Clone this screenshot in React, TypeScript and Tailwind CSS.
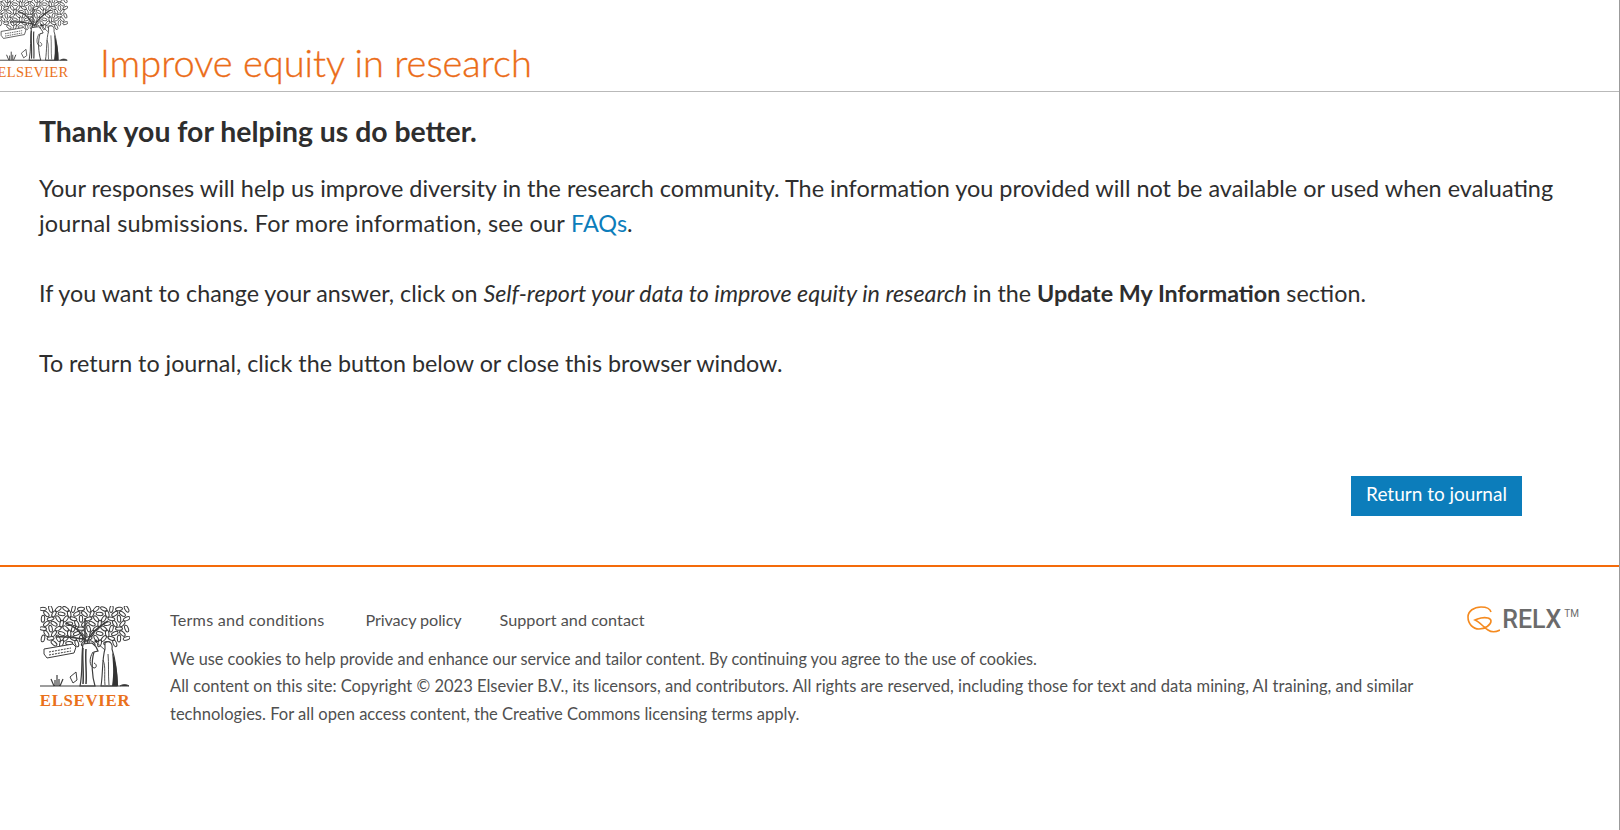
// Elsevier "thank you" confirmation page
const leaves: [number, number, number][] = [];
for (let row = 0; row < 8; row++) {
  for (let col = 0; col < 12; col++) {
    const x = 3 + col * 7.6 + (row % 2) * 3.4;
    const y = 3 + row * 4.9;
    const dx = (x - 45) / 46;
    const dy = (y - 18) / 21;
    if (dx * dx * dx * dx + dy * dy * dy * dy < 1 && x < 90) leaves.push([x, y, (row * 47 + col * 71) % 180]);
  }
}

function TreeLogo({ className }: { className: string }) {
  return (
    <svg viewBox="0 0 90 81" className={className} fill="none" stroke="#3d3d3d">
      {leaves.map(([x, y, r], i) => (
        <ellipse key={i} cx={x} cy={y} rx="3.5" ry="1.7" strokeWidth="1" transform={`rotate(${r} ${x} ${y})`} />
      ))}
      {/* branches */}
      <path d="M45 38C44 30 38 22 26 17M47 36C50 28 56 22 68 15M45 36V12M43 33C36 32 26 30 16 31" strokeWidth="1.5" />
      {/* trunk */}
      <path d="M40 80C43 66 41 50 43 38L52 37C55 39 57 42 58 45L54 46C51 56 52 70 55 80Z" fill="#fff" strokeWidth="1.2" />
      <path d="M43 42C42 52 44 68 43 78M46 43C45 54 47 68 46 78" strokeWidth="1.5" />
      <path d="M53 46C49 52 49 60 54 62C57 62 57 58 54 57" strokeWidth="1" />
      {/* banner */}
      <path d="M4 43L33 38L36 41L34 47L7 52L4 48Z" fill="#fff" strokeWidth="1" />
      <path d="M9 46L31 42M9 49L31 45" strokeWidth="1" strokeDasharray="2 1" />
      {/* figure */}
      <path d="M65 37C69 34 73 37 72 43C75 52 77 68 77 80H61C63 68 62 52 65 43Z" fill="#fff" strokeWidth="1.1" />
      <path d="M72 46C76 56 78 68 78 80H72C74 68 73 56 72 46Z" fill="#333" stroke="none" />
      <path d="M65 44L56 36M63 54C66 60 64 70 65 79M68 48C69 58 68 68 69 79" strokeWidth="0.9" />
      <circle cx="56" cy="35" r="1.6" fill="#333" stroke="none" />
      {/* ground and plants */}
      <path d="M0 80H89" strokeWidth="1.2" />
      <path d="M17 80V69M14 80L11 73M20 80L23 73M15 80L15 74M19 80L19 73" strokeWidth="1.2" />
      <path d="M30 71L36 66L37 74L33 77Z" fill="#fff" strokeWidth="1" />
      <path d="M80 80C83 78 86 78 89 80" fill="#333" strokeWidth="1" />
    </svg>
  );
}

function RelxMark() {
  return (
    <svg viewBox="0 0 34 27" className="w-[34px] h-[27px] shrink-0" fill="none" stroke="#f58a1f" strokeWidth="1.6">
      <path d="M25 6C24 2 19 1 15 1C8 1 2 5 2 11C2 18 7 23 13 23C19 23 25 19 25 15C25 12 20 11 15 12C13 12.5 11 13 9 14C14 16 17 21 22 24C25 26 30 26 34 24" />
    </svg>
  );
}

export default function App() {
  return (
    <div className="min-h-[830px] bg-white border-r border-[#9b9b9b] font-['Lato',sans-serif] text-[#2e2e2e]">
      {/* Encabezado */}
      <header className="h-[92px] border-b border-[#b9b9b9] flex items-end">
        <div className="w-[70px] h-[91px] pb-[12px] -ml-[2px] flex flex-col items-center justify-end">
          <TreeLogo className="w-[70px] h-[63px] shrink-0" />
          <span className="mt-[4px] font-['Liberation_Serif',serif] text-[14.5px] leading-[14px] tracking-[0.3px] text-[#e9711c]">ELSEVIER</span>
        </div>
        <h1 className="ml-[32px] mb-[5px] text-[38px] leading-[48px] font-light text-[#eb6c17] [-webkit-text-stroke:0.35px_#eb6c17]">Improve equity in research</h1>
      </header>

      <main className="h-[475px] border-b-2 border-[#f46b0a] px-[39px] pt-[19px] flex flex-col">
        <h2 className="text-[28.4px] leading-[40px] font-bold">Thank you for helping us do better.</h2>
        <div className="mt-[20px] text-[23.3px] leading-[35px] w-[1540px]">
          <p className="text-[23.45px]">
            Your responses will help us improve diversity in the research community. The information you provided will not be available or used when evaluating{' '}
            <span className="tracking-[0.18px]">journal submissions. For more information, see our</span>{' '}
            <a className="text-[#0c7dbb]">FAQs</a>.
          </p>
          <p className="mt-[35px]">
            If you want to change your answer, click on <em>Self-report your data to improve equity in research</em> in the <strong>Update My Information</strong> section.
          </p>
          <p className="mt-[35px]">To return to journal, click the button below or close this browser window.</p>
        </div>
        <div className="mt-[95px] flex justify-end pr-[97px] mr-[-39px]">
          <button className="w-[171px] h-[40px] pb-[3px] bg-[#0c7dbb] text-white text-[19px]">Return to journal</button>
        </div>
      </main>

      {/* Pie de página */}
      <footer className="flex px-[39px] pt-[39px] text-[#505050]">
        <div className="w-[92px] shrink-0 flex flex-col items-center">
          <TreeLogo className="w-[90px] h-[81px] shrink-0" />
          <span className="font-['Liberation_Serif',serif] font-bold text-[16.8px] leading-[18px] mt-[5px] tracking-[0.7px] text-[#e9711c]">ELSEVIER</span>
        </div>
        <div className="ml-[39px] flex-1 text-[16.55px]">
          <nav className="flex leading-[28px] text-[16.2px]">
            <a className="w-[195.5px] tracking-[0.2px]">Terms and conditions</a>
            <a className="w-[134px] tracking-[-0.1px]">Privacy policy</a>
            <a className="tracking-[0.05px]">Support and contact</a>
          </nav>
          <p className="mt-[12px] leading-[26px] w-[1260px] text-[16.3px]">We use cookies to help provide and enhance our service and tailor content. By continuing you agree to the use of cookies.</p>
          <p className="leading-[28px] w-[1260px]">All content on this site: Copyright © 2023 Elsevier B.V., its licensors, and contributors. All rights are reserved, including those for text and data mining, AI training, and similar technologies. For all open access content, the Creative Commons licensing terms apply.</p>
        </div>
        <div className="ml-auto flex items-start h-[28px] mr-[1px] text-[#6b6b6b] font-['Roboto',sans-serif]">
          <RelxMark />
          <span className="ml-[2px] mt-[-1px] font-medium text-[25px] leading-[30px]">RELX</span>
          <span className="ml-[3px] mt-[2px] text-[10px] leading-[12px]">TM</span>
        </div>
      </footer>
    </div>
  );
}
